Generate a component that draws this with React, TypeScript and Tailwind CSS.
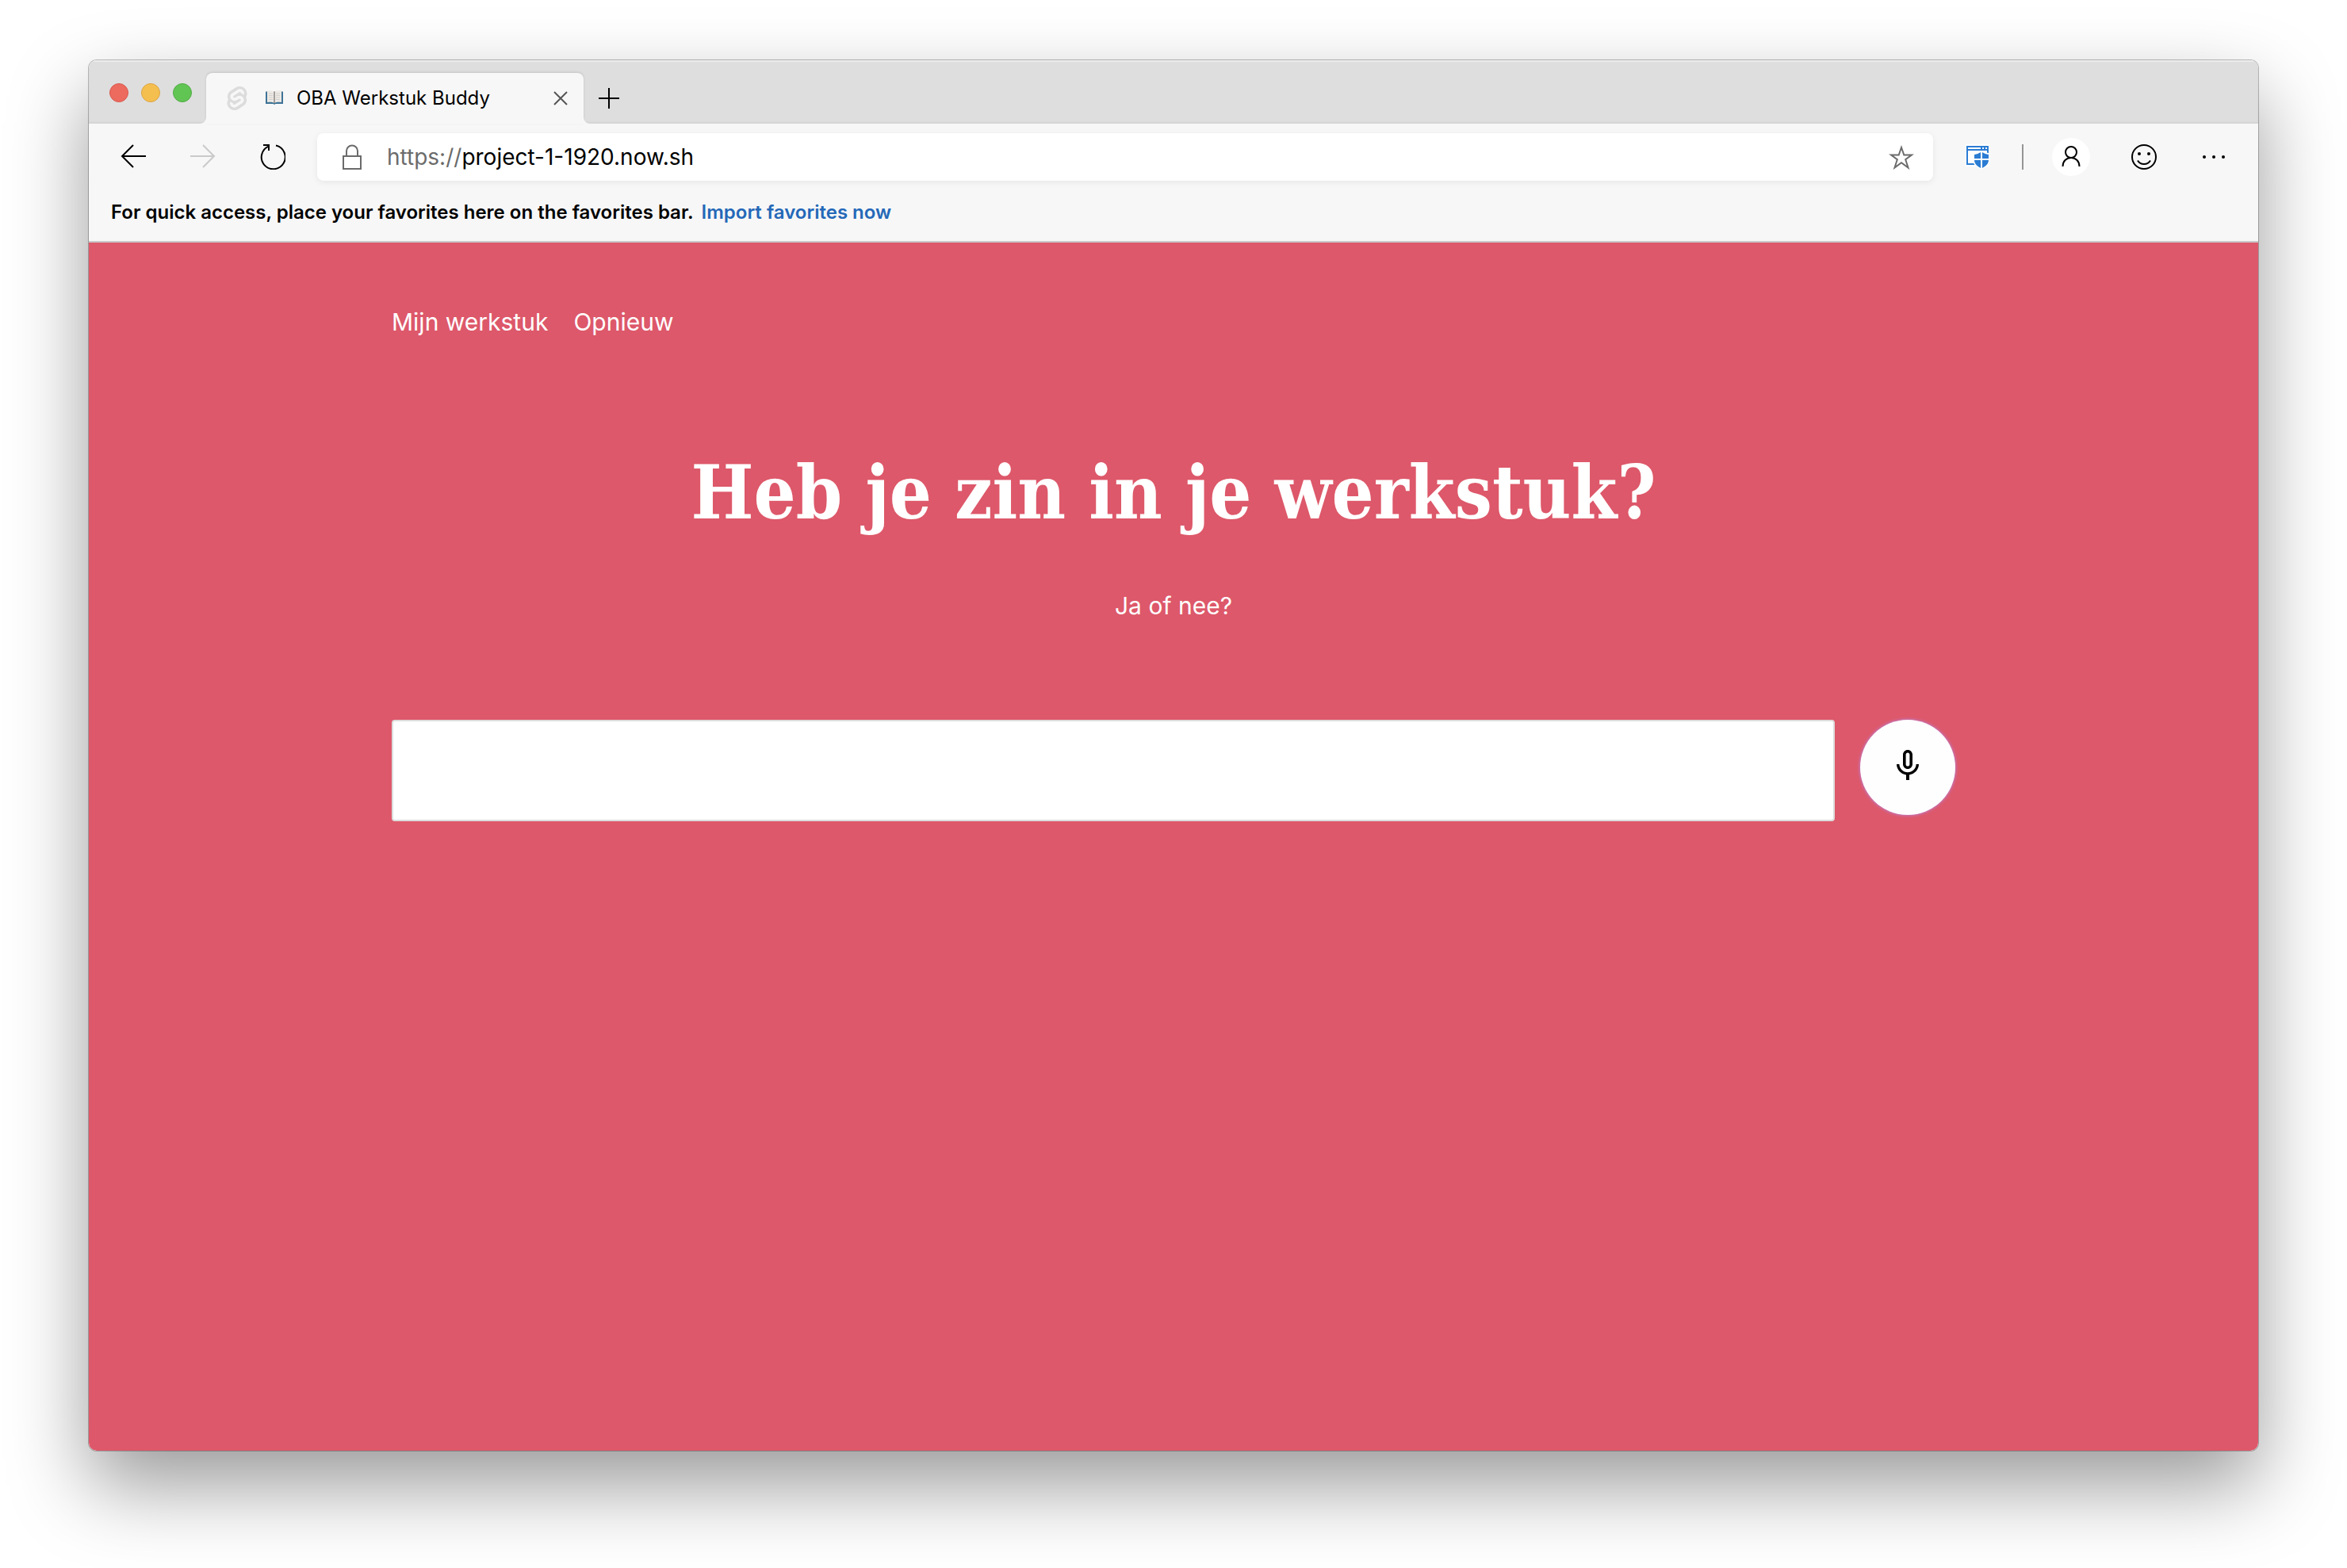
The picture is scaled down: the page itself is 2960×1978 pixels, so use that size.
import { MdMicNone } from "react-icons/md";
import { SiSvelte } from "react-icons/si";

function BackIcon() {
  return (
    <svg viewBox="0 0 32 32" className="size-8" fill="none" stroke="currentColor" strokeWidth="2">
      <path d="M32 15H2M16 1L2 15l14 14" />
    </svg>
  );
}

function ForwardIcon() {
  return (
    <svg viewBox="0 0 32 32" className="size-8" fill="none" stroke="currentColor" strokeWidth="2">
      <path d="M0 15h30M16 1l14 14-14 14" />
    </svg>
  );
}

function ReloadIcon() {
  return (
    <svg viewBox="0 0 32 32" className="size-8" fill="none" stroke="currentColor" strokeWidth="2">
      <path d="M20 1.600A15 15 0 1 1 10.500 2.600" />
      <path d="M4 1h7v7" />
    </svg>
  );
}

function LockIcon() {
  return (
    <svg viewBox="0 0 32 32" className="size-8" fill="none" stroke="currentColor" strokeWidth="2">
      <rect x="5" y="15" width="22" height="16" />
      <path d="M9 15V8.500a7 7 0 0 1 14 0V15" />
    </svg>
  );
}

function StarIcon() {
  return (
    <svg viewBox="0 0 32 32" className="size-8" fill="none" stroke="currentColor" strokeWidth="2">
      <path d="M16 4l3.300 9.500H29l-7.800 5.700 3.300 10.300L16 23.200l-8.500 6.300 3.300-10.300L3 13.500h9.700z" />
    </svg>
  );
}

function GuardIcon() {
  return (
    <svg viewBox="0 0 32 32" className="size-8">
      <rect x="1" y="0" width="30" height="28" fill="#fff" />
      <path d="M2 2h28v24H2z" fill="#2b7cd3" />
      <path d="M4 4h16v2H4zM22 4h2v2h-2zM26 4h2v2h-2zM4 8h24v16H4z" fill="#fff" />
      <path d="M21 8l11 4v8c0 5-5 9-11 12-6-3-11-7-11-12v-8z" fill="#fff" />
      <path d="M20 10v8h-8v-5c3-.3 5.500-1.500 8-3zM22 10c2.500 1.500 5 2.700 8 3v5h-8zM12 20h8v10c-4.500-2.500-8-5.500-8-10zM22 20h8c0 4.500-3.500 7.500-8 10z" fill="#2b7cd3" />
    </svg>
  );
}

function PersonIcon() {
  return (
    <svg viewBox="0 0 32 32" className="size-8" fill="none" stroke="currentColor" strokeWidth="2">
      <circle cx="16" cy="10" r="7" />
      <path d="M5.500 28c0-6.500 4.500-11 10.500-11s10.500 4.500 10.500 11" />
    </svg>
  );
}

function SmileIcon() {
  return (
    <svg viewBox="0 0 32 32" className="size-8" fill="none" stroke="currentColor" strokeWidth="2">
      <circle cx="16" cy="16" r="15" />
      <path d="M8 20.500c3.500 6 12.500 6 16 0" />
      <circle cx="10" cy="12" r="2" fill="currentColor" stroke="none" />
      <circle cx="22" cy="12" r="2" fill="currentColor" stroke="none" />
    </svg>
  );
}

function MoreIcon() {
  return (
    <svg viewBox="0 0 32 32" className="size-8" fill="currentColor">
      <circle cx="4" cy="16" r="2" />
      <circle cx="16" cy="16" r="2" />
      <circle cx="28" cy="16" r="2" />
    </svg>
  );
}

function BookIcon() {
  return (
    <svg viewBox="0 0 24 20" className="h-5 w-6">
      <path d="M1 1.500h22v15.500H13.500l-1.500 1-1.500-1H1z" fill="#3f7396" />
      <path d="M3 .5C6 0 10 .2 12 1.500c2-1.300 6-1.500 9-1V15c-4-.5-7-.3-9 1-2-1.300-5-1.500-9-1z" fill="#eeeae6" />
      <path d="M12 1.500V16" stroke="#8a8683" strokeWidth="1.500" />
      <path d="M5 4h5M5 6.500h5M5 9h5M5 11.500h5M14 4h5M14 6.500h5M14 9h5M14 11.500h5" stroke="#d3cfcb" strokeWidth="1" />
    </svg>
  );
}

function TabFlare({ className }: { className: string }) {
  return (
    <svg viewBox="0 0 8 8" className={className} fill="#f7f7f7">
      <path d="M8 0v8H0a8 8 0 0 0 8-8z" />
    </svg>
  );
}

const toolButton = "flex size-12 shrink-0 items-center justify-center";

function TabStrip() {
  return (
    <div className="flex h-20 items-end bg-[#dedede] shadow-[inset_0_2px_0_#ececec,inset_0_-2px_2px_#d4d4d4]">
      <div className="flex h-20 w-[148px] shrink-0 items-center gap-4 pt-0.5 pl-[26px]">
        <button aria-label="Close window" className="size-6 rounded-full border border-[#d8594e] bg-[#ed6a5e]" />
        <button aria-label="Minimize window" className="size-6 rounded-full border border-[#dba544] bg-[#f5bf4f]" />
        <button aria-label="Zoom window" className="size-6 rounded-full border border-[#52ab45] bg-[#61c554]" />
      </div>
      <div className="relative flex h-16 w-[476px] items-center rounded-t-lg bg-[#f7f7f7] pr-4 pl-6 shadow-[0_-1px_3px_rgba(0,0,0,0.12)]">
        <TabFlare className="absolute bottom-0 -left-2 size-2" />
        <TabFlare className="absolute -right-2 bottom-0 size-2 -scale-x-100" />
        <SiSvelte className="size-[30px] text-[#dcdcdc]" />
        <div className="ml-5 flex items-center gap-4">
          <BookIcon />
          <span className="text-2xl whitespace-nowrap">OBA Werkstuk Buddy</span>
        </div>
        <button aria-label="Close tab" className="ml-auto flex size-[26px] items-center justify-center text-[#555]">
          <svg viewBox="0 0 18 18" className="size-[18px]" fill="none" stroke="currentColor" strokeWidth="2">
            <path d="M1 1l16 16M17 1L1 17" />
          </svg>
        </button>
      </div>
      <button aria-label="New tab" className="flex size-16 items-center justify-center">
        <svg viewBox="0 0 26 26" className="size-[26px]" stroke="currentColor" strokeWidth="2">
          <path d="M13 0v26M0 13h26" />
        </svg>
      </button>
    </div>
  );
}

function Toolbar() {
  return (
    <div className="flex items-center px-8 py-3">
      <div className="flex gap-10">
        <button aria-label="Back" className={toolButton}>
          <BackIcon />
        </button>
        <button aria-label="Forward" disabled className={`${toolButton} text-[#cacaca]`}>
          <ForwardIcon />
        </button>
        <button aria-label="Reload" className={toolButton}>
          <ReloadIcon />
        </button>
      </div>
      <div className="ml-8 flex h-[60px] flex-1 items-center rounded-lg bg-white pr-6 pl-7 text-[28px] shadow-[0_2px_8px_rgba(0,0,0,0.07)]">
        <span className="text-[#6b6b6b]">
          <LockIcon />
        </span>
        <label htmlFor="address" className="ml-7 text-[#6b6b6b]">
          https://
        </label>
        <input id="address" type="text" defaultValue="project-1-1920.now.sh" className="min-w-0 flex-1 bg-transparent outline-none" />
        <button aria-label="Add to favorites" className="text-[#6b6b6b]">
          <StarIcon />
        </button>
      </div>
      <button aria-label="Application Guard" className={`${toolButton} ml-8`}>
        <GuardIcon />
      </button>
      <div className="ml-8 h-8 w-0.5 bg-[#959595]" />
      <button aria-label="Profile" className={`${toolButton} ml-9 rounded-full bg-white`}>
        <PersonIcon />
      </button>
      <button aria-label="Send feedback" className={`${toolButton} ml-11`}>
        <SmileIcon />
      </button>
      <button aria-label="Settings and more" className={`${toolButton} ml-10`}>
        <MoreIcon />
      </button>
    </div>
  );
}

function FavoritesBar() {
  return (
    <div className="flex h-16 items-center gap-2.5 px-7 pb-2 text-2xl font-semibold">
      <p>For quick access, place your favorites here on the favorites bar.</p>
      <a href="#import" className="text-[#2468b8]">
        Import favorites now
      </a>
    </div>
  );
}

function Page() {
  return (
    <main className="flex-1 border-t-2 border-[#c9c9c9] bg-[#dd586a] px-8 pt-20 text-[30px] leading-10 text-white">
      <div className="mx-auto max-w-[1972px]">
        <nav className="flex gap-8">
          <a href="#werkstuk">Mijn werkstuk</a>
          <a href="#opnieuw">Opnieuw</a>
        </nav>
        <h1 className="mt-33 text-center font-['DejaVu_Serif_Condensed','DejaVu_Serif',serif] text-[93px] leading-32 font-bold">
          Heb je zin in je werkstuk?
        </h1>
        <p className="mt-[58px] text-center">
          <label htmlFor="answer">Ja of nee?</label>
        </p>
        <form className="mt-31 flex items-start gap-8">
          <input id="answer" type="text" className="h-32 min-w-0 flex-1 rounded border-2 border-[#ddd] bg-white px-6 text-black outline-none" />
          <button type="button" aria-label="Spreek je antwoord in" className="flex size-30 items-center justify-center rounded-full bg-[#fefefe] pb-1 text-black shadow-[0_0_4px_#b48cf0]">
            <MdMicNone className="size-12" />
          </button>
        </form>
      </div>
    </main>
  );
}

export default function App() {
  return (
    <div className="flex min-h-screen flex-col bg-white px-28 pt-[76px] pb-[148px] font-['Inter','Liberation_Sans',sans-serif] text-black">
      <div className="flex flex-1 flex-col rounded-[10px] shadow-[0_0_0_1px_rgba(0,0,0,0.25),0_44px_100px_rgba(0,0,0,0.4)]">
        <div className="flex flex-1 flex-col overflow-hidden rounded-[10px] bg-[#f7f7f7]">
          <TabStrip />
          <Toolbar />
          <FavoritesBar />
          <Page />
        </div>
      </div>
    </div>
  );
}
